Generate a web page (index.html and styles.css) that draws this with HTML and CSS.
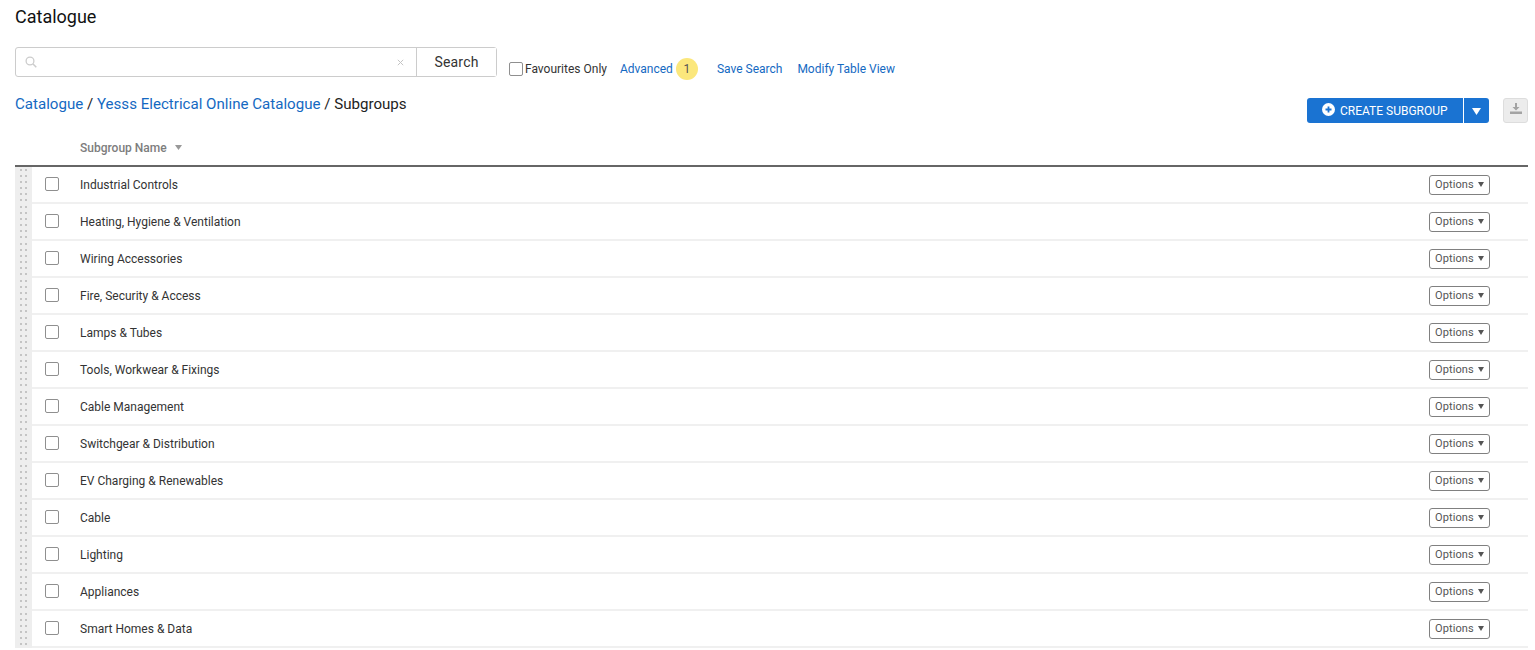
FILE: index.html

```html
<!DOCTYPE html>
<html lang="en">
<head>
  <meta charset="UTF-8">
  <title>Catalogue</title>
  <link rel="stylesheet" href="styles.css">
</head>
<body>
  <h1>Catalogue</h1>

  <div class="search-row">
    <div class="search-box">
      <div class="search-input">
        <svg class="search-icon" width="12" height="12" viewBox="0 0 12 12"><circle cx="5" cy="5" r="3.9" fill="none" stroke="#ccc" stroke-width="1.3"/><path d="M8 8l3.3 3.3" stroke="#ccc" stroke-width="1.5"/></svg>
        <svg class="clear-icon" width="7" height="7" viewBox="0 0 7 7"><path d="M.8.8l5.4 5.4M6.2.8L.8 6.2" stroke="#c4c4c4" stroke-width="1"/></svg>
      </div>
      <button class="search-btn">Search</button>
    </div>
    <label class="fav"><span class="checkbox"></span>Favourites Only</label>
    <a class="advanced" href="#">Advanced</a>
    <span class="badge">1</span>
    <a class="save" href="#">Save Search</a>
    <a class="modify" href="#">Modify Table View</a>
  </div>

  <div class="crumb-row">
    <div class="crumbs"><a href="#">Catalogue</a> / <a href="#">Yesss Electrical Online Catalogue</a> / Subgroups</div>
    <div class="actions">
      <button class="create">
        <svg width="13" height="13" viewBox="0 0 13 13"><circle cx="6.5" cy="6.5" r="6.5" fill="#fff"/><path d="M6.5 3.5v6M3.5 6.5h6" stroke="#1a73d2" stroke-width="1.8"/></svg>
        CREATE SUBGROUP
      </button>
      <button class="create-arrow"><svg width="9" height="7" viewBox="0 0 9 7"><path d="M0 0h9L4.5 7z" fill="#fff"/></svg></button>
      <button class="download">
        <svg width="14" height="14" viewBox="0 0 14 14"><path d="M6 1h2v4h2.5L7 8.5 3.5 5H6z" fill="#a3a3a3"/><path d="M1 9.5h12V12H1z" fill="#a3a3a3"/></svg>
      </button>
    </div>
  </div>

  <div class="table-head">
    <span>Subgroup Name</span>
    <svg width="7" height="5" viewBox="0 0 7 5"><path d="M0 0h7L3.5 5z" fill="#999"/></svg>
  </div>

  <div class="table">
    <div class="row"><div class="handle"></div><span class="checkbox"></span><span class="name">Industrial Controls</span><button class="options">Options <i></i></button></div>
    <div class="row"><div class="handle"></div><span class="checkbox"></span><span class="name">Heating, Hygiene &amp; Ventilation</span><button class="options">Options <i></i></button></div>
    <div class="row"><div class="handle"></div><span class="checkbox"></span><span class="name">Wiring Accessories</span><button class="options">Options <i></i></button></div>
    <div class="row"><div class="handle"></div><span class="checkbox"></span><span class="name">Fire, Security &amp; Access</span><button class="options">Options <i></i></button></div>
    <div class="row"><div class="handle"></div><span class="checkbox"></span><span class="name">Lamps &amp; Tubes</span><button class="options">Options <i></i></button></div>
    <div class="row"><div class="handle"></div><span class="checkbox"></span><span class="name">Tools, Workwear &amp; Fixings</span><button class="options">Options <i></i></button></div>
    <div class="row"><div class="handle"></div><span class="checkbox"></span><span class="name">Cable Management</span><button class="options">Options <i></i></button></div>
    <div class="row"><div class="handle"></div><span class="checkbox"></span><span class="name">Switchgear &amp; Distribution</span><button class="options">Options <i></i></button></div>
    <div class="row"><div class="handle"></div><span class="checkbox"></span><span class="name">EV Charging &amp; Renewables</span><button class="options">Options <i></i></button></div>
    <div class="row"><div class="handle"></div><span class="checkbox"></span><span class="name">Cable</span><button class="options">Options <i></i></button></div>
    <div class="row"><div class="handle"></div><span class="checkbox"></span><span class="name">Lighting</span><button class="options">Options <i></i></button></div>
    <div class="row"><div class="handle"></div><span class="checkbox"></span><span class="name">Appliances</span><button class="options">Options <i></i></button></div>
    <div class="row"><div class="handle"></div><span class="checkbox"></span><span class="name">Smart Homes &amp; Data</span><button class="options">Options <i></i></button></div>
  </div>
</body>
</html>
```

FILE: styles.css

```css
* {
  box-sizing: border-box;
}

html, body {
  height: 650px;
  overflow: hidden;
}

body {
  margin: 0;
  padding: 0 7px 0 15px;
  font-family: Roboto, sans-serif;
  background-color: #fff;
  color: #222;
}

a {
  color: #1469c2;
  text-decoration: none;
}

h1 {
  margin: 0;
  padding-top: 6px;
  height: 47px;
  font-size: 18px;
  font-weight: 400;
  line-height: 22px;
  color: #111;
}

.search-row {
  display: flex;
  align-items: center;
  height: 30px;
  font-size: 12px;
}

.search-box {
  display: flex;
  width: 482px;
  height: 30px;
  border: 1px solid #ccc;
  border-radius: 3px;
}

.search-input {
  flex: 1;
  display: flex;
  align-items: center;
  justify-content: space-between;
  padding: 0 12px 0 9px;
}

.search-btn {
  width: 80px;
  border: none;
  border-left: 1px solid #ccc;
  background: #fff;
  font-family: inherit;
  font-size: 14px;
  letter-spacing: 0.2px;
  color: #333;
  padding: 0;
}

.fav {
  display: flex;
  align-items: center;
  margin: 14px 0 0 12px;
  color: #333;
}

.checkbox {
  display: block;
  flex: none;
  width: 14px;
  height: 14px;
  border: 1px solid #8f8f8f;
  border-radius: 2px;
  background: #fff;
}

.fav .checkbox {
  margin-right: 2px;
}

.search-row a {
  margin-top: 14px;
}

.advanced {
  margin-left: 13px;
}

.badge {
  display: flex;
  align-items: center;
  justify-content: center;
  width: 22px;
  height: 22px;
  margin: 14px 0 0 3px;
  border-radius: 50%;
  background-color: #fbe77c;
  color: #555;
  font-size: 12px;
}

.save {
  margin-left: 19px;
}

.modify {
  margin-left: 15px;
}

.crumb-row {
  display: flex;
  justify-content: space-between;
  align-items: flex-start;
  height: 51px;
  padding-top: 18px;
}

.crumbs {
  font-size: 15.1px;
  line-height: 18px;
  color: #222;
}

.actions {
  display: flex;
  margin-top: 3px;
}

.actions button {
  height: 25px;
  padding: 0;
  border: none;
  font-family: inherit;
}

.create {
  display: flex;
  align-items: center;
  gap: 5px;
  width: 156px;
  padding-left: 15px !important;
  background-color: #1a73d2;
  color: #fff;
  font-size: 12px;
  border-radius: 3px 0 0 3px;
}

.create svg {
  margin-top: -2px;
}

.create-arrow {
  width: 25px;
  margin-left: 1px;
  background-color: #1a73d2;
  border-radius: 0 3px 3px 0;
}

.download {
  width: 25px;
  margin-left: 14px;
  background-color: #ececec;
  border: 1px solid #ddd !important;
  border-radius: 3px;
}

.table-head {
  display: flex;
  align-items: center;
  gap: 8px;
  height: 39px;
  padding: 2px 0 0 65px;
  border-bottom: 2px solid #666;
  font-size: 12px;
  font-weight: 500;
  color: #7d7d7d;
}

.row {
  display: flex;
  align-items: center;
  height: 37px;
  border-bottom: 2px solid #f0f0f0;
}

.handle {
  align-self: stretch;
  flex: none;
  width: 17px;
  margin-bottom: -2px;
  background-color: #eee;
  background-image: radial-gradient(circle, #c4c4c4 1px, transparent 1.2px), radial-gradient(circle, #c4c4c4 1px, transparent 1.2px);
  background-size: 4px 6px;
  background-position: 4px 0, 9px 0;
  background-repeat: repeat-y;
}

.row .checkbox {
  margin: 0 0 2px 13px;
}

.name {
  flex: 1;
  margin-left: 21px;
  font-size: 12px;
  color: #333;
}

.options {
  display: flex;
  align-items: center;
  justify-content: space-between;
  width: 61px;
  height: 20px;
  margin-right: 38px;
  padding: 0 5px;
  border: 1px solid #808080;
  border-radius: 3px;
  background: #fff;
  font-family: inherit;
  font-size: 11px;
  letter-spacing: 0.1px;
  color: #555;
}

.options i {
  width: 0;
  height: 0;
  border-left: 3.5px solid transparent;
  border-right: 3.5px solid transparent;
  border-top: 5px solid #555;
}
```
